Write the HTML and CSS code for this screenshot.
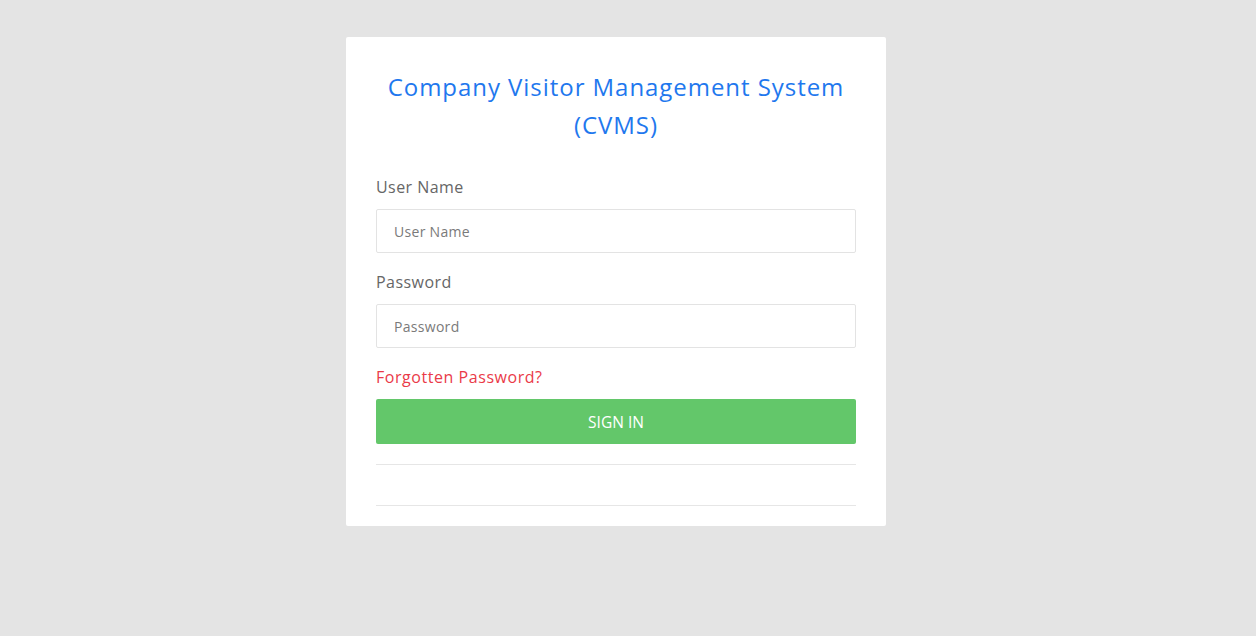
FILE: index.html
```html
<!DOCTYPE html>
<html lang="en">
<head>
<meta charset="utf-8">
<title>CVMS Login</title>
<link rel="stylesheet" href="styles.css">
</head>
<body>
<main class="page">
  <section class="card">
    <h1 class="title">Company Visitor Management System (CVMS)</h1>
    <form class="form">
      <div class="field">
        <label class="label" for="user">User Name</label>
        <input class="input" id="user" type="text" placeholder="User Name">
      </div>
      <div class="field">
        <label class="label" for="pass">Password</label>
        <input class="input" id="pass" type="password" placeholder="Password">
      </div>
      <a class="forgot" href="#">Forgotten Password?</a>
      <button class="btn" type="button">SIGN IN</button>
    </form>
    <hr class="rule">
    <hr class="rule rule-last">
  </section>
</main>
</body>
</html>
```

FILE: styles.css
```css
* { box-sizing: border-box; }
html, body { margin: 0; padding: 0; }
body {
  background: #e4e4e4;
  font-family: "Open Sans", "Noto Sans", sans-serif;
  height: 636px;
}
.page {
  display: flex;
  justify-content: center;
  padding: 37px 24px 0 0;
}
.card {
  width: 540px;
  background: #fff;
  border-radius: 2px;
  padding: 31px 30px 20px;
}
.title {
  margin: 0 0 31px;
  font-weight: 400;
  font-size: 24px;
  line-height: 38px;
  color: #1f78ee;
  text-align: center;
  padding: 0 4px;
  letter-spacing: 0.95px;
}
.form { display: flex; flex-direction: column; }
.field { display: flex; flex-direction: column; margin-bottom: 17px; }
.label {
  font-size: 16px;
  line-height: 24px;
  color: #666;
  margin-bottom: 10px;
  letter-spacing: 0.45px;
}
.input {
  height: 44px;
  border: 1px solid #e3e3e3;
  border-radius: 2px;
  padding: 0 17px;
  font-family: inherit;
  font-size: 14px;
  letter-spacing: 0.3px;
  color: #555;
  outline: none;
}
.input::placeholder { color: #7a7a7a; }
.forgot {
  font-size: 16px;
  line-height: 24px;
  color: #ea3a48;
  text-decoration: none;
  margin-bottom: 10px;
  letter-spacing: 0.55px;
}
.btn {
  height: 45px;
  border: 0;
  border-radius: 2px;
  background: #63c76a;
  color: #fff;
  font-family: inherit;
  font-size: 15.5px;
  font-weight: 500;
  cursor: pointer;
}
.rule {
  border: 0;
  border-top: 1px solid #e6e6e6;
  margin: 20px 0 0;
}
.rule-last { margin-top: 40px; }
```
